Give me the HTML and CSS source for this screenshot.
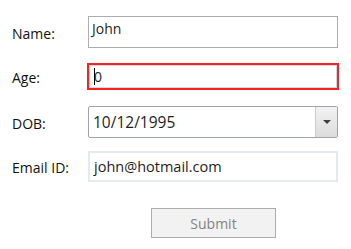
FILE: index.html
```html
<!DOCTYPE html>
<html lang="en">
<head>
  <meta charset="UTF-8" />
  <title>Details</title>
  <link rel="stylesheet" href="styles.css">
</head>
<body>
  <form class="form">
    <div class="row row-name">
      <label class="label">Name:</label>
      <textarea class="field area">John</textarea>
    </div>

    <div class="row row-age">
      <label class="label">Age:</label>
      <div class="focus-ring">
        <div class="field age"><span class="caret"></span>0</div>
      </div>
    </div>

    <div class="row row-dob">
      <label class="label">DOB:</label>
      <div class="combo">
        <span class="combo-text">10/12/1995</span>
        <span class="combo-btn"><span class="arrow"></span></span>
      </div>
    </div>

    <div class="row row-email">
      <label class="label">Email ID:</label>
      <div class="field email">john@hotmail.com</div>
    </div>

    <div class="actions">
      <button type="button" class="submit" disabled>Submit</button>
    </div>
  </form>
</body>
</html>
```

FILE: styles.css
```css
body {
  margin: 0;
  background: #fff;
  font-family: 'Open Sans', 'Noto Sans', sans-serif;
  color: #1e1e1e;
}

.form {
  padding-top: 16px;
  display: flex;
  flex-direction: column;
}

.row {
  display: flex;
  align-items: center;
}

.label {
  width: 76px;
  padding-left: 12px;
  padding-top: 2px;
  font-size: 14px;
  color: #111;
}

.row-name { height: 32px; margin-bottom: 15px; }
.row-age { height: 27px; margin-bottom: 16px; }
.row-dob { height: 32px; margin-bottom: 13px; }
.row-email { height: 31px; margin-bottom: 26px; }

.field {
  box-sizing: border-box;
  width: 250px;
  font-family: inherit;
  color: #1e1e1e;
}

.area {
  height: 32px;
  margin: 0;
  border: 1px solid #abadb3;
  padding: 3px 3px;
  font-size: 14px;
  line-height: 18px;
  resize: none;
  overflow: hidden;
  outline: none;
}

.focus-ring {
  margin-left: -1px;
  border: 2px solid #ff1f1f;
}

.age {
  width: 248px;
  height: 23px;
  border: 1px solid #c5dbec;
  padding-left: 4px;
  font-size: 14px;
  line-height: 21px;
  display: flex;
  align-items: center;
}

.caret {
  width: 1px;
  height: 17px;
  background: #000;
  margin-right: -1px;
}

.combo {
  box-sizing: border-box;
  width: 250px;
  height: 32px;
  border: 1px solid #9ea3ad;
  border-radius: 2px;
  display: flex;
  align-items: stretch;
}

.combo-text {
  flex: 1;
  padding-left: 4px;
  font-size: 15.5px;
  display: flex;
  align-items: center;
}

.combo-btn {
  width: 21px;
  border-left: 1px solid #c8ccd2;
  background: linear-gradient(#f2f2f2, #dcdcdc);
  display: flex;
  align-items: center;
  justify-content: center;
}

.arrow {
  width: 0;
  height: 0;
  border-left: 4px solid transparent;
  border-right: 4px solid transparent;
  border-top: 4px solid #404040;
}

.email {
  height: 31px;
  border: 2px solid #e3e9ef;
  padding-left: 4px;
  font-size: 14.5px;
  display: flex;
  align-items: center;
}

.actions {
  padding-left: 151px;
}

.submit {
  width: 125px;
  height: 30px;
  border: 1px solid #adadad;
  background: #f2f2f2;
  color: #838383;
  font-family: inherit;
  font-size: 14px;
  padding: 0;
}
```
